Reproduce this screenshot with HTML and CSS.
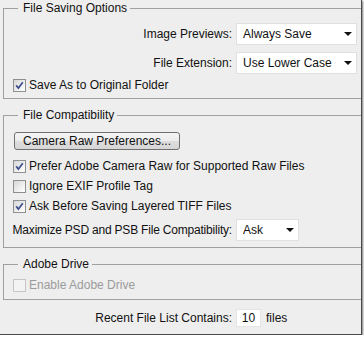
FILE: index.html
```html
<!DOCTYPE html>
<html lang="en">
<head>
    <meta charset="UTF-8">
    <title>File Handling</title>
    <link rel="stylesheet" href="styles.css">
</head>
<body>
    <div class="dialog">
        <!-- File Saving Options -->
        <fieldset class="group group-saving">
            <legend>File Saving Options</legend>
            <div class="field-row">
                <span class="field-label">Image Previews:</span>
                <div class="dropdown"><span>Always Save</span><i class="caret"></i></div>
            </div>
            <div class="field-row">
                <span class="field-label">File Extension:</span>
                <div class="dropdown"><span>Use Lower Case</span><i class="caret"></i></div>
            </div>
            <label class="check check-first">
                <span class="box"><svg width="11" height="11" viewBox="0 0 11 11"><path d="M2.2 5.4l2.2 2.7L8.8 2.2" /></svg></span>
                Save As to Original Folder
            </label>
        </fieldset>

        <!-- File Compatibility -->
        <fieldset class="group group-compat">
            <legend>File Compatibility</legend>
            <button class="btn" type="button">Camera Raw Preferences...</button>
            <div class="check-list">
                <label class="check">
                    <span class="box"><svg width="11" height="11" viewBox="0 0 11 11"><path d="M2.2 5.4l2.2 2.7L8.8 2.2" /></svg></span>
                    Prefer Adobe Camera Raw for Supported Raw Files
                </label>
                <label class="check">
                    <span class="box"></span>
                    Ignore EXIF Profile Tag
                </label>
                <label class="check">
                    <span class="box"><svg width="11" height="11" viewBox="0 0 11 11"><path d="M2.2 5.4l2.2 2.7L8.8 2.2" /></svg></span>
                    Ask Before Saving Layered TIFF Files
                </label>
            </div>
            <div class="field-row field-row-max">
                <span class="field-label label-long">Maximize PSD and PSB File Compatibility:</span>
                <div class="dropdown dropdown-small"><span>Ask</span><i class="caret"></i></div>
            </div>
        </fieldset>

        <!-- Adobe Drive -->
        <fieldset class="group group-drive">
            <legend>Adobe Drive</legend>
            <label class="check disabled">
                <span class="box"></span>
                Enable Adobe Drive
            </label>
        </fieldset>

        <div class="field-row recent-row">
            <span class="field-label">Recent File List Contains:</span>
            <div class="recent-value">
                <span class="num">10</span>
                <span>files</span>
            </div>
        </div>
    </div>
</body>
</html>
```

FILE: styles.css
```css
* {
    margin: 0;
    padding: 0;
    box-sizing: border-box;
}

body {
    font-family: 'Liberation Sans', Arial, sans-serif;
    font-size: 12px;
    color: #111;
    background-color: #ffffff;
    line-height: 14px;
}

/* Dialog panel with the screenshot drop shadow */
.dialog {
    width: 362px;
    height: 335px;
    padding-top: 1px;
    background-color: #eeeeee;
    border-right: 1px solid #4a4a4a;
    border-bottom: 1px solid #4a4a4a;
    box-shadow: 1px 1px 2px rgba(0, 0, 0, 0.55);
    overflow: hidden;
}

/* right edge of the groups runs past the crop */
.group {
    width: 366px;
    min-width: 366px;
    margin: 0 0 0 3px;
    border: 1px solid #a0a0a0;
    padding: 8px 11px 3px 9px;
}

.group legend {
    margin-left: 5px;
    padding: 0 3px 0 5px;
    line-height: 14px;
}

.group-compat {
    margin-top: 9px;
    padding-top: 10px;
    padding-bottom: 6px;
}

.group-drive {
    margin-top: 9px;
    padding-top: 4px;
    padding-bottom: 4px;
}

/* Label + dropdown rows */
.field-row {
    display: grid;
    grid-template-columns: minmax(0, 1fr) 121px;
    column-gap: 4px;
    align-items: center;
}

.field-row + .field-row {
    margin-top: 7px;
}

.field-label {
    display: flex;
    justify-content: flex-end;
    white-space: nowrap;
}

.label-long {
    letter-spacing: -0.2px;
}

.dropdown {
    height: 22px;
    display: flex;
    align-items: center;
    justify-content: space-between;
    padding: 0 4px 0 6px;
    background-color: #ffffff;
    border: 1px solid #e0e0e0;
}

.dropdown-small {
    width: 63px;
}

.caret {
    border-left: 4px solid transparent;
    border-right: 4px solid transparent;
    border-top: 4px solid #111;
}

.field-row-max {
    margin-top: 3px;
}

/* Checkboxes */
.check {
    display: flex;
    align-items: center;
    gap: 3px;
    height: 20px;
    white-space: nowrap;
}

.check-first {
    margin-top: 1px;
}

.box {
    width: 13px;
    height: 13px;
    display: flex;
    align-items: center;
    justify-content: center;
    border: 1px solid #8e8f8f;
    background: linear-gradient(135deg, #d6d6d6, #f4f4f4 70%, #ffffff);
}

.box path {
    fill: none;
    stroke: #3d4f8e;
    stroke-width: 1.7;
}

.check.disabled {
    color: #9b9b9b;
}

.check.disabled .box {
    border-color: #c6c6c6;
    background: #f3f3f3;
}

.check-list {
    margin-top: 6px;
}

.btn {
    display: block;
    width: 166px;
    height: 18px;
    margin-left: 1px;
    font: inherit;
    color: #111;
    line-height: 16px;
    text-align: center;
    border: 1px solid #707070;
    border-radius: 3px;
    background: linear-gradient(#f5f5f5, #ececec 50%, #dedede 50%, #d6d6d6);
}

/* Recent files */
.recent-row {
    margin-top: 9px;
    padding-right: 4px;
}

.recent-value {
    display: flex;
    align-items: center;
    gap: 5px;
}

.num {
    width: 25px;
    height: 18px;
    line-height: 16px;
    text-align: center;
    background-color: #ffffff;
    border: 1px solid #e4e4e4;
}
```
